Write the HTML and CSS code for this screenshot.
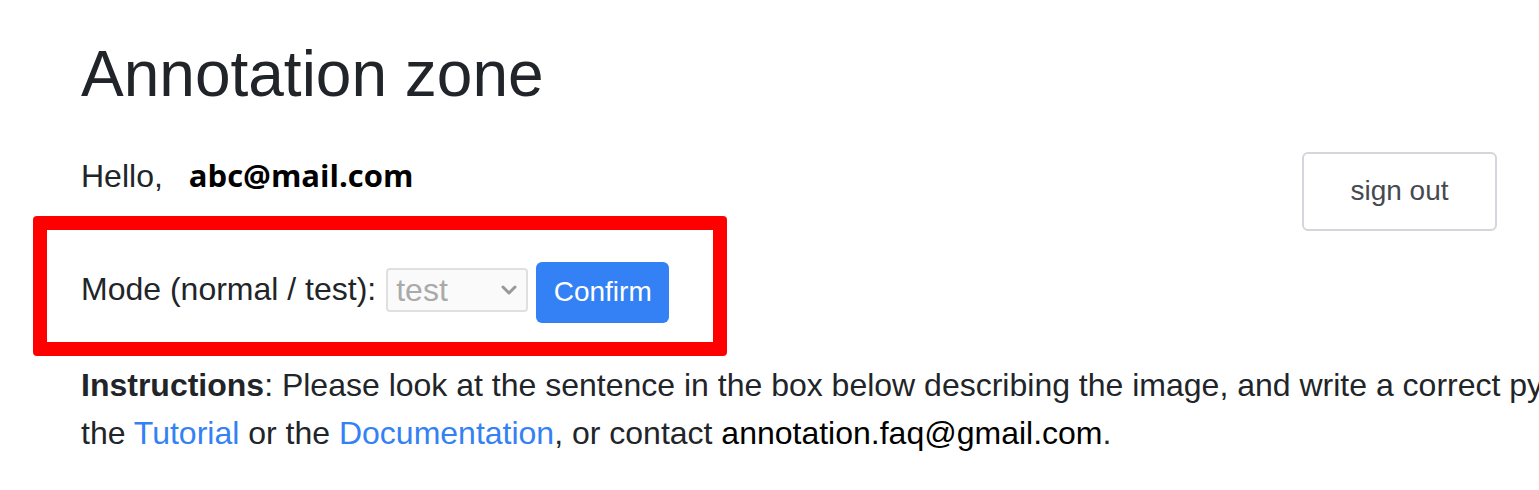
FILE: index.html
```html
<!DOCTYPE html>
<html>
<head>
<meta charset="utf-8">
<link rel="stylesheet" href="styles.css">
</head>
<body>
<div class="page">
  <h1 class="title">Annotation zone</h1>
  <div class="user-row">
    <div class="greeting">Hello,<span class="email">abc@mail.com</span></div>
    <button class="btn-outline">sign out</button>
  </div>
  <div class="mode-row">
    <label class="mode-label">Mode (normal / test):</label>
    <select class="mode-select" disabled>
      <option>test</option>
      <option>normal</option>
    </select>
    <button class="btn-primary">Confirm</button>
  </div>
  <p class="instructions"><span class="line"><b>Instructions</b>: Please look at the sentence in the box below describing the image, and write a correct py</span><span class="line">the <a href="#">Tutorial</a> or the <a href="#">Documentation</a>, or contact <span class="contact">annotation.faq@gmail.com</span>.</span></p>
  <div class="highlight"></div>
</div>
</body>
</html>
```
FILE: styles.css
```css
html, body {
  margin: 0;
  padding: 0;
  background: #fff;
  overflow: hidden;
}
body {
  font-family: "Liberation Sans", Arial, sans-serif;
  font-size: 32px;
  line-height: 1.5;
  color: #212529;
}
.page {
  position: relative;
  padding: 36px 42px 0 81px;
}
.title {
  margin: 0;
  font-size: 64px;
  font-weight: 400;
  line-height: 1.2;
  color: #212529;
}
.user-row {
  display: flex;
  justify-content: space-between;
  align-items: flex-start;
  margin-top: 39px;
}
.greeting {
  line-height: 48px;
}
.email {
  font-family: "Open Sans", sans-serif;
  font-weight: 700;
  font-size: 31px;
  line-height: 1;
  color: #000;
  margin-left: 26px;
}
.btn-outline {
  width: 195px;
  height: 79px;
  background: #fff;
  border: 2px solid #d3d6da;
  border-radius: 6px;
  font-family: "Liberation Sans", Arial, sans-serif;
  font-size: 28px;
  color: #464a50;
  padding: 0;
}
.mode-row {
  display: flex;
  align-items: flex-start;
  margin-top: 31px;
}
.mode-label {
  margin-top: 3px;
  margin-right: 10px;
  line-height: 48px;
}
.mode-select {
  appearance: none;
  -webkit-appearance: none;
  margin-top: 6px;
  width: 142px;
  height: 44px;
  border: 2px solid #e0e0e0;
  border-radius: 4px;
  background: #fafafa url("data:image/svg+xml,%3Csvg xmlns='http://www.w3.org/2000/svg' width='18' height='12' viewBox='0 0 18 12'%3E%3Cpath d='M3 3l6 6 6-6' fill='none' stroke='%23999' stroke-width='3' stroke-linecap='round' stroke-linejoin='round'/%3E%3C/svg%3E") no-repeat right 8px center;
  font-family: "Liberation Sans", Arial, sans-serif;
  font-size: 32px;
  color: #aaaaaa;
  padding: 0 0 0 8px;
  opacity: 1;
}
.btn-primary {
  margin-left: 8px;
  width: 133px;
  height: 61px;
  border: none;
  border-radius: 6px;
  background: #3381f4;
  color: #fff;
  font-family: "Liberation Sans", Arial, sans-serif;
  font-size: 28px;
  padding: 0;
}
.instructions {
  margin: 38px 0 0;
  line-height: 48px;
  white-space: nowrap;
}
.instructions .line {
  display: block;
}
.instructions b {
  font-weight: 700;
}
.instructions a {
  color: #3381f4;
  text-decoration: none;
}
.contact {
  color: #000;
}
.highlight {
  position: absolute;
  left: 33px;
  top: 216px;
  width: 666px;
  height: 112px;
  border: 14px solid #ff0000;
  border-radius: 4px;
}
```
